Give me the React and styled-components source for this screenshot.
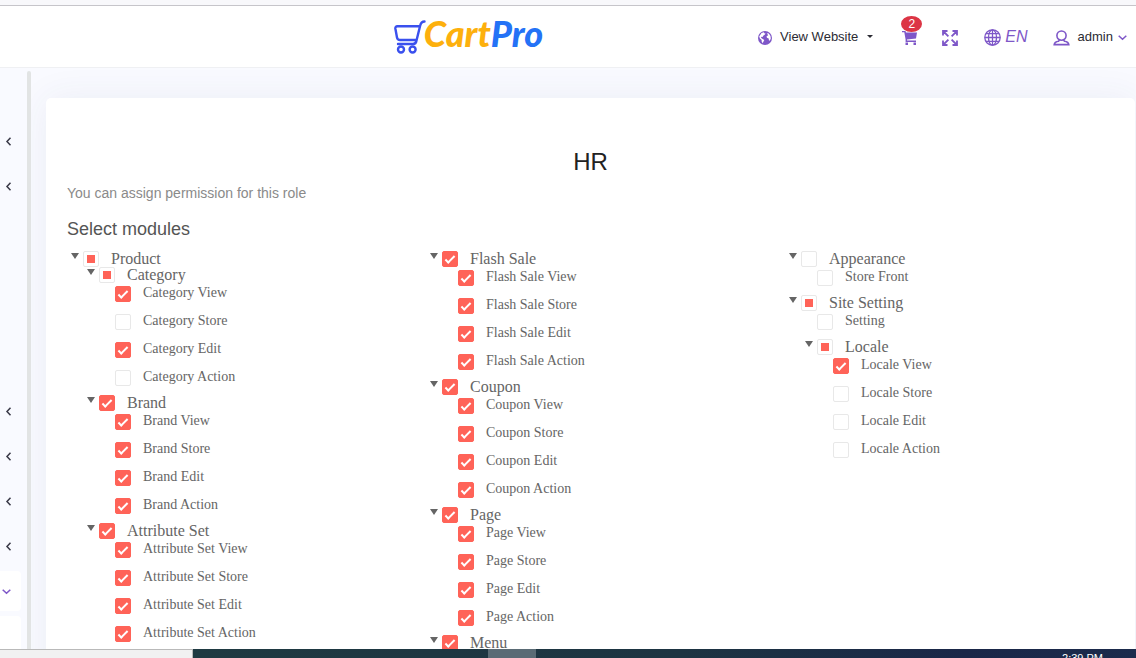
import React, { useEffect, useRef, useState } from "react";
import styled, { createGlobalStyle } from "styled-components";

const ACCENT = "#7e57c8";
const CORAL = "#ff6358";

const GlobalStyle = createGlobalStyle`
  *, *::before, *::after { box-sizing: border-box; }
  body { margin: 0; font-family: "Liberation Sans", Arial, sans-serif; color: #656565; background: #f9faff; }
  button { font: inherit; color: inherit; border: 0; padding: 0; background: none; cursor: pointer; }
`;

const Page = styled.div`
  height: 100vh;
  display: flex;
  flex-direction: column;
  overflow: hidden;
`;

const BrowserEdge = styled.div`
  flex: none;
  height: 6px;
  background: #f8f8fb;
  border-bottom: 1px solid #c6c5ca;
`;

const Header = styled.header`
  flex: none;
  height: 62px;
  display: grid;
  grid-template-columns: 11fr auto 6fr auto;
  align-items: center;
  padding-right: 9px;
  background: #fff;
  border-bottom: 1px solid #eff0f3;
`;

const Logo = styled.a`
  grid-column: 2;
  display: flex;
  align-items: flex-start;
  height: 36px;
  text-decoration: none;
  font: italic 900 36px/28px Lato, sans-serif;
  color: #fdb00d;
  span { color: #2472f6; }
  svg { flex: none; margin-right: -2px; }
`;

const Actions = styled.nav`
  grid-column: 4;
  display: flex;
  align-items: center;
  font-size: 13px;
  line-height: 20px;
  color: #2b2b33;
`;

const Action = styled.button`
  display: flex;
  align-items: center;
  gap: ${(p) => p.$gap || 0}px;
  margin-left: ${(p) => p.$space || 0}px;
  position: relative;
  svg { display: block; flex: none; margin-top: 2px; color: ${ACCENT}; }
`;

const Caret = styled.i`
  border: 3px solid transparent;
  border-top-color: #2b2b33;
  border-bottom: 0;
  margin-left: 1px;
`;

const Badge = styled.span`
  position: absolute;
  left: -1px;
  top: -12px;
  width: 21px;
  height: 16px;
  border-radius: 50%;
  background: #dc3545;
  color: #fff;
  font-size: 12px;
  line-height: 16px;
  text-align: center;
`;

const Language = styled.em`
  font-size: 16px;
  color: ${ACCENT};
`;

const Body = styled.div`
  flex: 1;
  min-height: 0;
  display: flex;
`;

const Sidebar = styled.aside`
  flex: none;
  width: 27px;
  padding: 53px 6px 0 0;
  display: flex;
  flex-direction: column;
  gap: 5px;
  overflow: hidden;
`;

const SideItem = styled.button`
  flex: none;
  height: 40px;
  display: flex;
  align-items: center;
  padding-left: ${(p) => (p.$open ? 2 : 5)}px;
  border-radius: 0 4px 4px 0;
  background: ${(p) => (p.$open ? "#fff" : "transparent")};
  color: ${(p) => (p.$open ? ACCENT : "#3a3a48")};
`;

const SubMenu = styled.div`
  flex: none;
  height: 60px;
  border-radius: 0 4px 4px 0;
  background: #fff;
`;

const ScrollThumb = styled.div`
  flex: none;
  width: 4px;
  margin-top: 3px;
  border-radius: 2px 2px 0 0;
  background: #e2e4e4;
`;

const Main = styled.main`
  flex: 1;
  min-width: 0;
  padding: 30px 1px 0 15px;
  overflow: hidden;
`;

const Card = styled.section`
  min-height: 100%;
  padding: 50px 21px 20px;
  border-radius: 5px;
  background: #fff;
  box-shadow: 0 0 36px rgba(60, 70, 110, 0.07);
`;

const Title = styled.h1`
  margin: 0 0 7px;
  font-size: 24px;
  line-height: 28px;
  font-weight: 400;
  text-align: center;
  color: #222;
`;

const Hint = styled.p`
  margin: 0 0 14px;
  font-size: 14px;
  line-height: 20px;
  color: #8a8a8a;
`;

const Heading = styled.h2`
  margin: 0 0 10px;
  font-size: 18px;
  line-height: 24px;
  font-weight: 400;
  color: #555;
`;

const Columns = styled.div`
  display: grid;
  grid-template-columns: repeat(3, minmax(0, 1fr));
  margin: 0 -15px;
  font-family: "Liberation Serif", "Times New Roman", serif;
`;

const Tree = styled.ul`
  list-style: none;
  margin: 0;
  padding: 0 0 0 ${(p) => (p.$root ? 15 : 16)}px;
`;

const Row = styled.div`
  display: flex;
  align-items: flex-start;
  height: ${(p) => (p.$leaf ? 28 : 16)}px;
  padding-left: ${(p) => (p.$leaf ? 16 : 0)}px;
`;

const Toggle = styled.button`
  width: 16px;
  height: 8px;
  display: flex;
  align-items: flex-end;
  justify-content: center;
  transform: ${(p) => (p.$open ? "none" : "rotate(-90deg)")};
  &::after {
    content: "";
    border: solid transparent;
    border-width: 6px 4px 0;
    border-top-color: #656565;
  }
`;

const Check = styled.label`
  display: flex;
  align-items: flex-start;
  gap: 12px;
  font-size: ${(p) => (p.$leaf ? 14 : 16)}px;
  line-height: ${(p) => (p.$leaf ? 20 : 16)}px;
  white-space: nowrap;
`;

const Box = styled.input`
  appearance: none;
  flex: none;
  width: 16px;
  height: 16px;
  margin: ${(p) => (p.$leaf ? 3 : 0)}px 0 0;
  display: grid;
  place-items: center;
  border: 1px solid #e8e8e8;
  border-radius: 2px;
  background: #fff;
  &:checked { background: ${CORAL}; border-color: ${CORAL}; }
  &:checked::before {
    content: "";
    width: 10px;
    height: 5px;
    margin-bottom: 2px;
    border: solid #fff;
    border-width: 0 0 2px 2px;
    transform: rotate(-45deg);
  }
  &:indeterminate::before {
    content: "";
    width: 8px;
    height: 8px;
    background: ${CORAL};
  }
`;

const Taskbar = styled.footer`
  flex: none;
  height: 9px;
  display: grid;
  grid-template-columns: 193px 295fr 48px 525fr auto;
  overflow: hidden;
  background: linear-gradient(90deg, #1f3a42 17%, #1d3442 60%, #1a2748 85%, #1b2b4c);
  color: #fff;
`;

const TaskSearch = styled.div`
  background: #f1f1f1;
  border: solid #b9b9b9;
  border-width: 1px 1px 0 0;
`;

const TaskApps = styled.div`
  display: flex;
  align-items: flex-end;
  justify-content: flex-end;
  padding-right: 118px;
  svg { display: block; }
`;

const TaskActive = styled.div`
  background: #5a6b75;
`;

const Clock = styled.time`
  grid-column: 5;
  padding: 4px 33px 0 0;
  font-size: 11px;
  line-height: 11px;
`;

const actions = (name, states) =>
  ["View", "Store", "Edit", "Action"].map((a, i) => ({ label: `${name} ${a}`, on: states[i] === "1" }));

const group = (label, states, state = "on") => ({ label, state, children: actions(label, states) });

const columns = [
  [
    {
      label: "Product",
      state: "mixed",
      children: [group("Category", "1010", "mixed"), group("Brand", "1111"), group("Attribute Set", "1111")],
    },
  ],
  [group("Flash Sale", "1111"), group("Coupon", "1111"), group("Page", "1111"), group("Menu", "1111")],
  [
    { label: "Appearance", state: "off", children: [{ label: "Store Front", on: false }] },
    {
      label: "Site Setting",
      state: "mixed",
      children: [{ label: "Setting", on: false }, group("Locale", "1000", "mixed")],
    },
  ],
];

function TreeCheck({ node, leaf }) {
  const ref = useRef(null);
  useEffect(() => {
    ref.current.indeterminate = node.state === "mixed";
  }, [node.state]);
  return (
    <Check $leaf={leaf}>
      <Box ref={ref} type="checkbox" $leaf={leaf} defaultChecked={node.on || node.state === "on"} />
      <span>{node.label}</span>
    </Check>
  );
}

function TreeNode({ node }) {
  const [open, setOpen] = useState(true);
  const leaf = !node.children;
  return (
    <li>
      <Row $leaf={leaf}>
        {!leaf && (
          <Toggle type="button" $open={open} aria-expanded={open} aria-label={node.label} onClick={() => setOpen(!open)} />
        )}
        <TreeCheck node={node} leaf={leaf} />
      </Row>
      {!leaf && open && (
        <Tree>
          {node.children.map((child) => (
            <TreeNode key={child.label} node={child} />
          ))}
        </Tree>
      )}
    </li>
  );
}

const Chevron = ({ down }) => (
  <svg width={down ? 9 : 7} height="9" viewBox={down ? "0 0 9 9" : "0 0 7 9"} fill="none" stroke="currentColor" strokeWidth="1.5">
    <path d={down ? "M.7 2.7 4.5 6.3 8.3 2.7" : "M5.5.8 2 4.5l3.5 3.7"} />
  </svg>
);

const LogoCart = () => (
  <svg width="32" height="36" viewBox="0 0 32 36" fill="none" stroke="#3a50ee" strokeWidth="2.4" strokeLinecap="round" strokeLinejoin="round">
    <path d="M25.500 7.300H3.500Q1 7.300 1.400 9.800L3 18.500Q3.500 21 6 21H22.500M30.500 2.500C27.500 2.500 26.800 4 26.200 6.500L22.500 21.500Q22 25 19 25H4" />
    <circle cx="7" cy="30.500" r="3" />
    <circle cx="18.600" cy="30.500" r="3" />
  </svg>
);

const Earth = () => (
  <svg width="14" height="14" viewBox="0 0 14 14">
    <circle cx="7" cy="7" r="7" fill="currentColor" />
    <path fill="#fff" d="M3.500 2 6 1.200 6.200 2.200 7.600 2.600 6.400 4 5.200 4.700 4.600 6 3.400 5.700 3 6.700 4.300 7.700 6.300 9 5.500 10.400 4.700 12.300 3.700 10.800 3.600 9 1.900 7.500 1.200 5.500ZM8.800 2.200 10.800 2.400 12.500 5 12.800 7.600 11.800 9.800 10.900 9.300 10.700 7.500 8.900 6.800 8.600 5.300 10.200 4.200Z" />
  </svg>
);

const Cart = () => (
  <svg width="16" height="16" viewBox="0 0 16 16" fill="currentColor">
    <path d="M0 1H3.500L4 2.500H15L14 8.500 5 9.500V10.600H14V12H3.600V9.500L2.300 2.300H0Z" />
    <path d="M3.500 12.500H6V15H3.500ZM11.500 12.500H14V15H11.500Z" />
  </svg>
);

const Expand = () => (
  <svg width="16" height="16" viewBox="0 0 16 16" fill="none" stroke="currentColor" strokeWidth="1.800">
    <path d="M1 5.500V1H5.500M1 1 6.400 6.400M10.500 1H15V5.500M15 1 9.600 6.400M1 10.500V15H5.500M1 15 6.400 9.600M15 10.500V15H10.500M15 15 9.600 9.600" />
  </svg>
);

const Globe = () => (
  <svg width="17" height="17" viewBox="0 0 17 17" fill="none" stroke="currentColor" strokeWidth="1.300">
    <circle cx="8.500" cy="8.500" r="7.700" />
    <ellipse cx="8.500" cy="8.500" rx="4" ry="7.700" />
    <path d="M8.500.8V16.200M.8 8.500H16.200M2 4.700H15M2 12.300H15" />
  </svg>
);

const User = () => (
  <svg width="17" height="16" viewBox="0 0 17 16" fill="none" stroke="currentColor" strokeWidth="1.600">
    <circle cx="8.500" cy="5.600" r="4.600" />
    <path d="M6.500 10 5.500 11.200Q1.600 11.800 1.200 14.600H15.800Q15.400 11.800 11.500 11.200L10.500 10" />
  </svg>
);

const AppTip = () => (
  <svg width="11" height="1" viewBox="0 0 11 1">
    <path fill="#dfe5e6" d="M0 0H11V1H0Z" />
  </svg>
);

const sideItems = [true, true, false, false, false, false, true, true, true, true];

export default function App() {
  return (
    <Page>
      <GlobalStyle />
      <BrowserEdge />
      <Header>
        <Logo href="#" aria-label="CartPro">
          <LogoCart />
          Cart<span>Pro</span>
        </Logo>
        <Actions>
          <Action type="button" $gap={8}>
            <Earth />
            View Website
            <Caret />
          </Action>
          <Action type="button" $space={29} aria-label="Orders">
            <Cart />
            <Badge>2</Badge>
          </Action>
          <Action type="button" $space={24} aria-label="Full screen">
            <Expand />
          </Action>
          <Action type="button" $space={26} $gap={4}>
            <Globe />
            <Language>EN</Language>
          </Action>
          <Action type="button" $space={25} $gap={8}>
            <User />
            <Action as="span" $gap={5}>
              admin
              <Chevron down />
            </Action>
          </Action>
        </Actions>
      </Header>
      <Body>
        <Sidebar>
          {sideItems.map((arrow, i) => (
            <SideItem key={i} type="button" aria-label={`Menu ${i + 1}`}>
              {arrow && <Chevron />}
            </SideItem>
          ))}
          <SideItem type="button" $open aria-label="Menu 11">
            <Chevron down />
          </SideItem>
          <SubMenu />
        </Sidebar>
        <ScrollThumb />
        <Main>
          <Card>
            <Title>HR</Title>
            <Hint>You can assign permission for this role</Hint>
            <Heading>Select modules</Heading>
            <Columns>
              {columns.map((nodes, i) => (
                <Tree key={i} $root>
                  {nodes.map((node) => (
                    <TreeNode key={node.label} node={node} />
                  ))}
                </Tree>
              ))}
            </Columns>
          </Card>
        </Main>
      </Body>
      <Taskbar>
        <TaskSearch />
        <TaskApps>
          <AppTip />
        </TaskApps>
        <TaskActive />
        <Clock>2:39 PM</Clock>
      </Taskbar>
    </Page>
  );
}
